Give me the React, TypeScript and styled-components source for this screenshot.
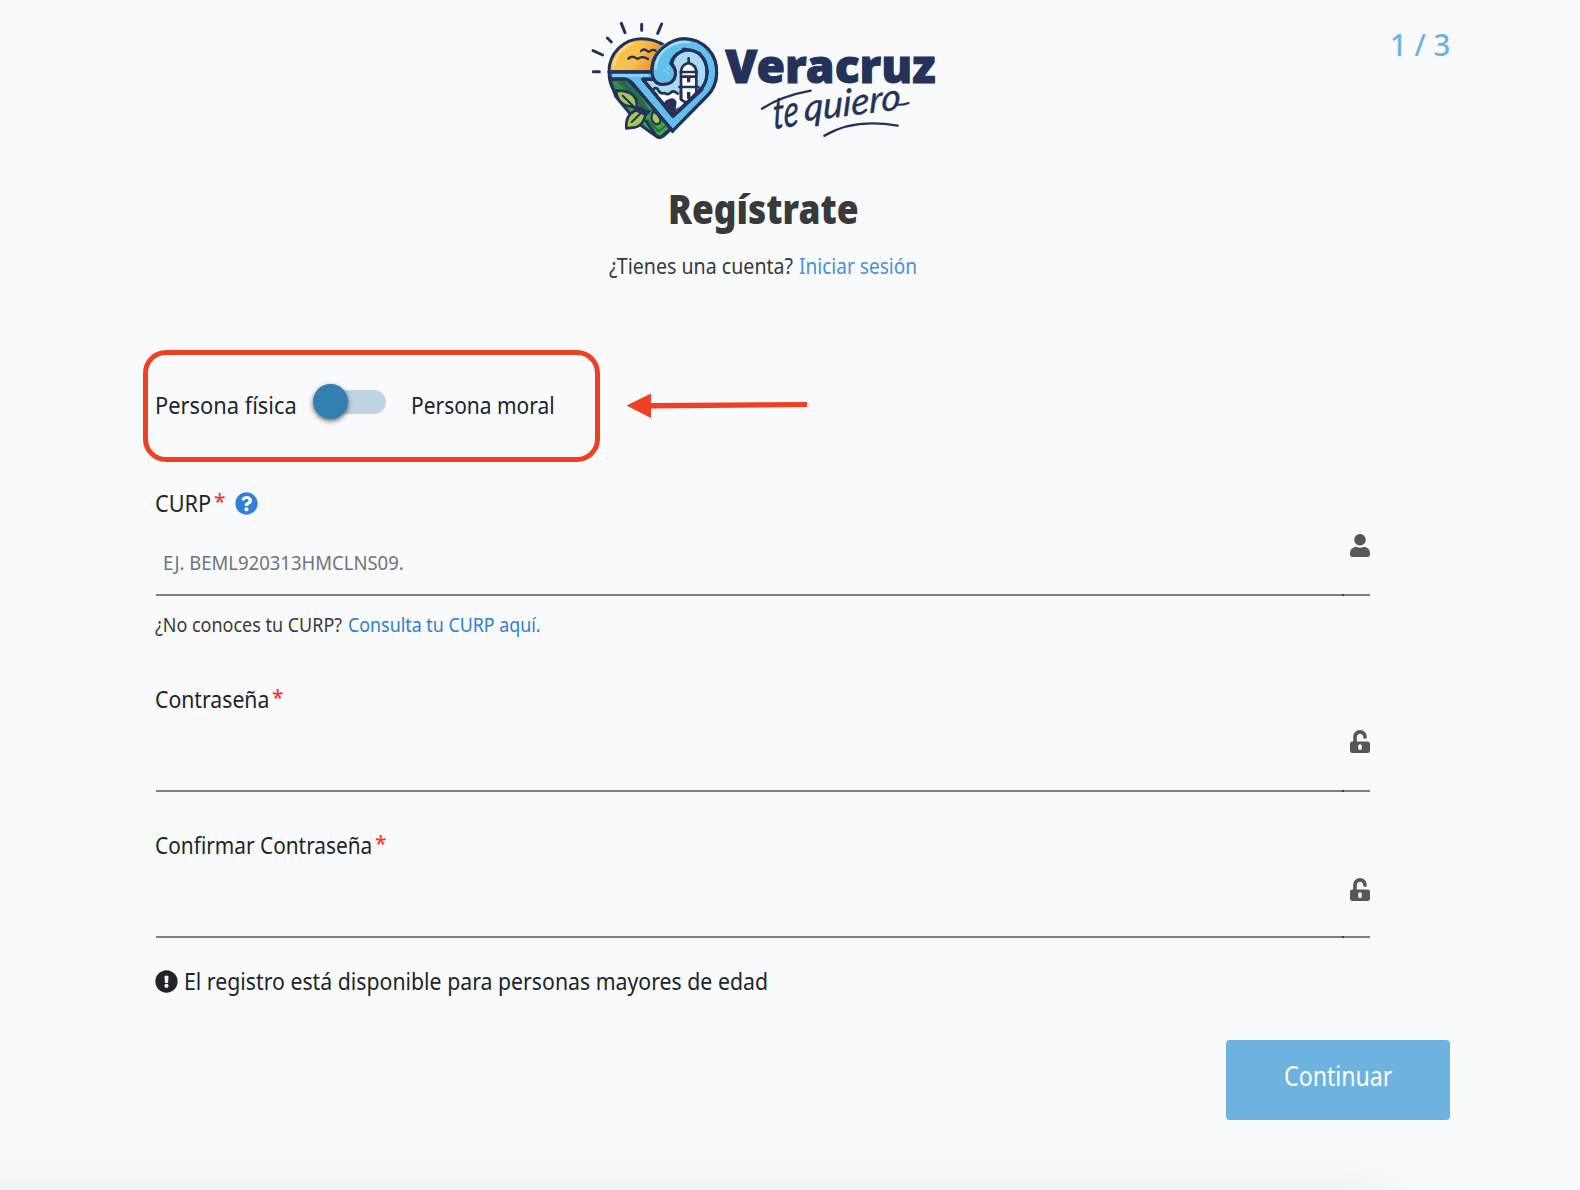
import React, { useLayoutEffect, useRef, useState } from 'react';
import styled, { createGlobalStyle } from 'styled-components';
import { FaUser, FaUnlockAlt, FaQuestionCircle, FaExclamationCircle } from 'react-icons/fa';

const GlobalStyle = createGlobalStyle`
  * { box-sizing: border-box; }
  body {
    margin: 0;
    background: #f9fafc;
    font-family: "Noto Sans", "Open Sans", sans-serif;
    color: #212529;
  }
`;

const Page = styled.div`
  width: 1580px;
  height: 1190px;
  overflow: hidden;
  display: flex;
  flex-direction: column;
`;

const Container = styled.main`
  flex: none;
  width: 1375px;
  height: 1190px;
  margin-left: 75px;
  display: flex;
  flex-direction: column;
`;

const Header = styled.header`
  display: grid;
  grid-template-columns: 1fr 370px 1fr;
  height: 150px;
  padding-top: 10px;
`;

const Logo = styled.svg`
  grid-column: 2;
  width: 370px;
  height: 140px;
  margin-left: 2px;
  overflow: visible;
`;

const Step = styled.div`
  justify-self: end;
  padding-top: 14px;
  font-size: 30px;
  line-height: 42px;
  font-weight: 500;
  color: #6db3e0;
`;

const Intro = styled.section`
  display: flex;
  flex-direction: column;
  align-items: center;
  height: 200px;
  padding: 31px 0 0 2px;
`;

const Title = styled.h1`
  margin: 0;
  font-size: 40px;
  line-height: 56px;
  font-weight: 900;
  color: #393939;
`;

const Prompt = styled.p<{ $size: number; $line: number }>`
  display: flex;
  margin: 0;
  gap: 7px;
  font-size: ${(p) => p.$size}px;
  line-height: ${(p) => p.$line}px;
  color: #393939;
`;

const Link = styled.a<{ $color: string }>`
  color: ${(p) => p.$color};
  text-decoration: none;
`;

const TypeRow = styled.div`
  display: flex;
  align-items: center;
  height: 112px;
  margin-left: 68px;
`;

const TypeBox = styled.div`
  display: flex;
  width: 457px;
  height: 112px;
  padding: 32px 0 0 8px;
  border: 5px solid #ee4023;
  border-radius: 23px;
`;

const TypeLabel = styled.span`
  font-size: 24px;
  line-height: 36px;
`;

const Track = styled.button`
  width: 72px;
  height: 24px;
  margin: 3px 26px 0 17px;
  padding: 0;
  border: 0;
  border-radius: 12px;
  background: #bdd5e3;
  display: flex;
  align-items: center;
`;

const Knob = styled.span`
  flex: none;
  width: 35px;
  height: 35px;
  margin: -1px 0 0 -1px;
  border-radius: 50%;
  background: #347fb1;
  box-shadow: 0 2px 5px rgba(0, 0, 0, 0.6);
`;

const Arrow = styled.svg`
  width: 182px;
  height: 26px;
  margin: -3px 0 0 26px;
`;

const Form = styled.form`
  display: flex;
  flex-direction: column;
  padding: 0 80px 0 81px;
`;

const Field = styled.div<{ $height: number }>`
  height: ${(p) => p.$height}px;
  display: flex;
  flex-direction: column;
  border-bottom: 2px solid #808080;
`;

const Label = styled.label`
  display: flex;
  font-size: 24px;
  line-height: 36px;
`;

const Required = styled.span`
  margin-left: 3px;
  font-size: 21px;
  line-height: 32px;
  font-weight: 500;
  color: #f03a2c;
`;

const Help = styled(FaQuestionCircle)`
  width: 23px;
  height: 23px;
  margin: 7px 0 0 9px;
  color: #327fd6;
`;

const InputRow = styled.div`
  flex: 1;
  display: flex;
  justify-content: space-between;
`;

const Placeholder = styled.span`
  padding: 27px 0 0 8px;
  font-size: 19.5px;
  line-height: 30px;
  color: #6c757d;
`;

const IconSlot = styled.span<{ $top: number }>`
  margin-left: auto;
  width: 20px;
  padding-top: ${(p) => p.$top}px;
  color: #54585b;
  svg { display: block; width: 20px; height: 23px; }
`;

const Tick = styled.i<{ $right: number }>`
  align-self: flex-end;
  flex: none;
  width: 2px;
  height: 2px;
  margin: 0 ${(p) => p.$right}px -2px 0;
  background: #3a3d40;
`;

const Spacer = styled.div<{ $h: number }>`
  flex: none;
  height: ${(p) => p.$h}px;
`;

const Note = styled.p`
  display: flex;
  align-items: center;
  margin: 0;
  height: 36px;
  gap: 7px;
  font-size: 24px;
  line-height: 36px;
  svg { width: 23px; height: 23px; margin-left: -1px; }
`;

const Submit = styled.button`
  align-self: flex-end;
  width: 224px;
  height: 80px;
  padding: 0 0 8px;
  border: 0;
  border-radius: 4px;
  background: #6db3e0;
  color: #fff;
  font-family: inherit;
  font-size: 27px;
  line-height: 40px;
`;

const FooterShade = styled.div`
  flex: none;
  width: 1450px;
  height: 60px;
  margin-left: -60px;
  box-shadow: 0 2px 50px rgba(0, 0, 0, 0.07);
`;

const FitBox = styled.span`
  display: inline-block;
  flex: none;
  margin-left: -1px;
  text-align: left;
  white-space: nowrap;
`;

const FitInner = styled.span`
  display: inline-block;
  transform-origin: 0 50%;
`;

/* Condenses a run of text horizontally so that it fills the given width. */
function Fit({ width, children }: { width: number; children: string }) {
  const ref = useRef<HTMLSpanElement>(null);
  const [scale, setScale] = useState(1);
  useLayoutEffect(() => {
    if (ref.current) setScale(width / ref.current.offsetWidth);
  }, [width, children]);
  return (
    <FitBox style={{ width }}>
      <FitInner ref={ref} style={{ transform: `scaleX(${scale})` }}>{children}</FitInner>
    </FitBox>
  );
}

const navy = '#24325a';

function VeracruzLogo() {
  return (
    <Logo viewBox="0 0 1110 420" role="img" aria-label="Veracruz te quiero">
      <defs>
        <linearGradient id="sun" x1="0" y1="0" x2="1" y2="0.3">
          <stop offset="0" stopColor="#fac65a" />
          <stop offset="0.6" stopColor="#f8c04a" />
          <stop offset="1" stopColor="#ee8a2c" />
        </linearGradient>
        <linearGradient id="land" x1="0" y1="0" x2="1" y2="1">
          <stop offset="0" stopColor="#2b8a47" />
          <stop offset="1" stopColor="#48ad52" />
        </linearGradient>
      </defs>
      <g transform="translate(14 15)" stroke={navy} strokeWidth="9" strokeLinecap="round" strokeLinejoin="round" fill="none">
        <path d="M110 25l11 28M171 28v18M231 27l-12 28M68 69l12 12M25 107l29 13M26 170h18" />
        <path d="M73 170A98 98 0 0 1 171 71C198 71 222 79 242 93L210 170Z" fill="url(#sun)" />
        <path d="M88 154Q96 103 144 85" stroke="#ffdd91" strokeWidth="6" />
        <path d="M131 131q11-11 24-1q5 3 7 0q14-8 28 2M169 108q9-9 19 0q5 4 9 0q10-7 18 1" strokeWidth="7" />
        <path d="M76 195L93 244L160 325L218 366Q224 370 231 364L262 338L125 190Z" fill="url(#land)" />
        <path d="M110 201Q148 231 187 289" stroke="#246d48" strokeWidth="19" />
        <path d="M190 315L222 349L244 332" stroke="#217843" strokeWidth="7" />
        <path d="M74 171H205L220 192H176L265 305L351 225L368 170L345 115L286 98L246 95Q270 71 298 71Q342 71 371 103Q398 132 396 178Q394 217 366 244L264 348L145 207Q134 192 114 192H78Z" fill="#61bfea" />
        <path d="M242 93Q202 121 202 164Q202 208 236 208Q268 207 272 179Q274 161 262 147Q265 122 290 110Q315 98 342 115Q367 136 367 174Q366 205 349 221L266 301L174 193L210 194Z" fill="#a9daf1" />
        <path d="M216 240Q238 232 247 238Q265 230 289 240V252L319 253L266 301L221 250Z" fill="#fff" stroke="none" />
        <path d="M208 221Q216 216 222 227Q229 238 240 234Q250 242 259 232Q268 225 279 236" strokeWidth="8" />
        <path d="M242 257Q268 240 276 261L273 282L285 273L266 298L238 266Z" fill={navy} stroke="none" />
        <path d="M289 254V171Q290 148 312 144Q335 150 335 172V236L306 264Z" fill="#fff" strokeWidth="8" />
        <path d="M312 144V130M288 171H337M284 216H341M291 185H333M289 251V225" strokeWidth="8" />
        <path d="M312 190V197M312 236V246" strokeWidth="10" strokeLinecap="square" />
        <path d="M202 163Q202 96 258 78Q303 60 347 81L354 99Q287 77 262 137L262 148Q276 171 268 190Q258 205 238 208Q204 205 202 163Z" fill="#61bfea" stroke="none" />
        <path d="M242 93Q202 121 202 164Q202 208 236 208Q268 207 272 179Q274 161 258 146Q265 119 290 109Q320 98 347 119Q369 140 367 175Q365 206 348 222L266 301L174 193H201" />
        <path d="M213 160Q217 113 258 92Q286 77 313 82" stroke="#a2e0fb" strokeWidth="7" />
        <path d="M84 181H191" stroke="#91d7f3" strokeWidth="7" strokeLinecap="butt" />
        <path d="M242 93Q266 71 298 71Q342 71 371 103Q398 132 396 178Q394 217 366 244L264 348L145 207Q134 192 114 192H78M73 170Q73 209 92 232M74 171H201M174 193L262 301" />
        <path d="M250 158v3M251 173v5M239 166v2" stroke="#8fd3f2" strokeWidth="6" />
        <path d="M139 274Q100 272 94 227Q132 226 146 242Q160 257 155 280Z" fill="#a4ca4e" strokeWidth="8" />
        <path d="M114 242L155 282" strokeWidth="6" />
        <path d="M125 340Q122 300 151 287Q171 278 184 290Q178 336 145 338Z" fill="#a4ca4e" strokeWidth="8" />
        <path d="M141 321L172 291" strokeWidth="6" />
        <path d="M205 289Q192 319 216 328Q238 324 218 298Z" fill="#a4ca4e" strokeWidth="6" />
        <path d="M149 279Q164 266 184 286L203 286L184 304L154 290Z" fill={navy} stroke="none" />
        <path d="M184 318L214 361Q224 372 236 363L251 350M256 344L264 350" />
      </g>
      <text x="436" y="219" fill={navy} stroke={navy} strokeWidth="3" fontFamily="Noto Sans, sans-serif" fontWeight="900" fontSize="138" textLength="631" lengthAdjust="spacingAndGlyphs">Veracruz</text>
      <g fill={navy} stroke={navy} strokeWidth="1" fontFamily="Lato, sans-serif" fontStyle="italic">
        <text transform="translate(580 358) rotate(-9) skewX(-8)" fontSize="134" textLength="78" lengthAdjust="spacingAndGlyphs">te</text>
        <text transform="translate(672 334) rotate(-7) skewX(-8)" fontSize="112" textLength="292" lengthAdjust="spacingAndGlyphs">quiero</text>
      </g>
      <path d="M546 296Q605 258 692 242M733 377Q822 324 953 347" fill="none" stroke={navy} strokeWidth="7" strokeLinecap="round" />
      <path d="M950 284Q968 286 986 279" fill="none" stroke={navy} strokeWidth="6" strokeLinecap="round" />
    </Logo>
  );
}

export default function App() {
  return (
    <Page>
      <GlobalStyle />
      <Container>
        <Header>
          <VeracruzLogo />
          <Step><Fit width={60}>1 / 3</Fit></Step>
        </Header>
        <Intro>
          <Title><Fit width={191}>Regístrate</Fit></Title>
          <Spacer $h={11} />
          <Prompt $size={21} $line={36}>
            <Fit width={184}>¿Tienes una cuenta?</Fit>
            <Link $color="#4a90d9"><Fit width={118}>Iniciar sesión</Fit></Link>
          </Prompt>
        </Intro>
        <TypeRow>
          <TypeBox>
            <TypeLabel><Fit width={142}>Persona física</Fit></TypeLabel>
            <Track type="button" aria-label="Tipo de persona"><Knob /></Track>
            <TypeLabel><Fit width={144}>Persona moral</Fit></TypeLabel>
          </TypeBox>
          <Arrow viewBox="0 0 182 26">
            <path d="M0.5 13.5L25 1.5V26ZM24 11L181 10V15L24 16.5Z" fill="#ee4023" />
          </Arrow>
        </TypeRow>
        <Form>
          <Spacer $h={23} />
          <Field $height={111}>
            <Label><Fit width={56}>CURP</Fit><Required>*</Required><Help /></Label>
            <InputRow>
              <Placeholder><Fit width={241}>EJ. BEML920313HMCLNS09.</Fit></Placeholder>
              <IconSlot $top={13}><FaUser /></IconSlot>
            </InputRow>
            <Tick $right={26} />
          </Field>
          <Spacer $h={11} />
          <Prompt $size={19.5} $line={36}>
            <Fit width={187}>¿No conoces tu CURP?</Fit>
            <Link $color="#2f7fd0"><Fit width={193}>Consulta tu CURP aquí.</Fit></Link>
          </Prompt>
          <Spacer $h={38} />
          <Field $height={111}>
            <Label><Fit width={114}>Contraseña</Fit><Required>*</Required></Label>
            <InputRow><IconSlot $top={13}><FaUnlockAlt /></IconSlot></InputRow>
            <Tick $right={26} />
          </Field>
          <Spacer $h={35} />
          <Field $height={111}>
            <Label><Fit width={217}>Confirmar Contraseña</Fit><Required>*</Required></Label>
            <InputRow><IconSlot $top={15}><FaUnlockAlt /></IconSlot></InputRow>
            <Tick $right={26} />
          </Field>
          <Spacer $h={25} />
          <Note><FaExclamationCircle /><Fit width={584}>El registro está disponible para personas mayores de edad</Fit></Note>
        </Form>
        <Spacer $h={41} />
        <Submit type="button"><Fit width={108}>Continuar</Fit></Submit>
      </Container>
      <FooterShade />
    </Page>
  );
}
